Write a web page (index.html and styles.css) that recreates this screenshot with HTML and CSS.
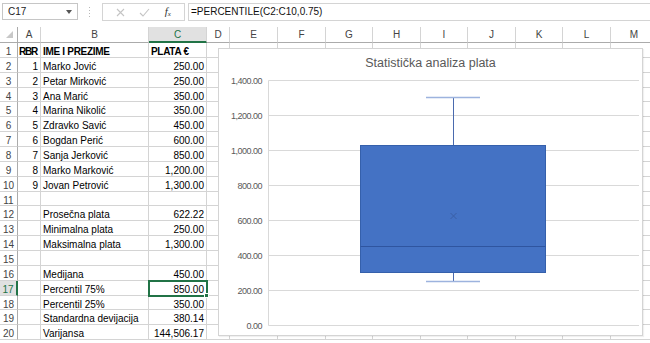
FILE: index.html
```html
<!DOCTYPE html>
<html lang="sr">
<head>
  <meta charset="UTF-8">
  <title>Statistička analiza plata</title>
  <link rel="stylesheet" href="styles.css">
</head>
<body>

<div class="topbar">
  <div class="namebox">
    <span>C17</span>
    <svg class="dropdown" width="6" height="4" viewBox="0 0 6 4"><polygon points="0,0 6,0 3,4" fill="#555"/></svg>
  </div>
  <svg class="grip" width="3" height="12" viewBox="0 0 3 12">
    <rect x="1" y="1" width="1" height="1" fill="#b8b8b8"/>
    <rect x="1" y="4" width="1" height="1" fill="#b8b8b8"/>
    <rect x="1" y="7" width="1" height="1" fill="#b8b8b8"/>
    <rect x="1" y="10" width="1" height="1" fill="#b8b8b8"/>
  </svg>
  <div class="buttons">
    <svg width="9" height="9" viewBox="0 0 9 9"><path d="M1 1 L8 8 M8 1 L1 8" stroke="#c4c4c4" stroke-width="1.1" fill="none"/></svg>
    <svg width="11" height="9" viewBox="0 0 11 9"><path d="M1 5 L4 8 L10 1" stroke="#c4c4c4" stroke-width="1.1" fill="none"/></svg>
    <span class="fx"><i>f</i><sub>x</sub></span>
  </div>
  <div class="formula">=PERCENTILE(C2:C10,0.75)</div>
</div>

<div class="sheet" id="sheet"></div>

<div class="chart">
  <div class="chart-title">Statistička analiza plata</div>
  <svg class="plot" width="423" height="258" viewBox="0 0 423 258">
    <g stroke="#d9d9d9" stroke-width="1">
      <line x1="49.5" y1="3.5" x2="420" y2="3.5"/>
      <line x1="49.5" y1="38.5" x2="420" y2="38.5"/>
      <line x1="49.5" y1="73.5" x2="420" y2="73.5"/>
      <line x1="49.5" y1="108.5" x2="420" y2="108.5"/>
      <line x1="49.5" y1="143.5" x2="420" y2="143.5"/>
      <line x1="49.5" y1="178.5" x2="420" y2="178.5"/>
      <line x1="49.5" y1="213.5" x2="420" y2="213.5"/>
      <line x1="49.5" y1="248.5" x2="420" y2="248.5"/>
      <line x1="49.5" y1="3.5" x2="49.5" y2="248.5"/>
    </g>
    <g class="axis-labels" text-anchor="end">
      <text x="43" y="6.5">1,400.00</text>
      <text x="43" y="41.5">1,200.00</text>
      <text x="43" y="76.5">1,000.00</text>
      <text x="43" y="111.5">800.00</text>
      <text x="43" y="146.5">600.00</text>
      <text x="43" y="181.5">400.00</text>
      <text x="43" y="216.5">200.00</text>
      <text x="43" y="251.5">0.00</text>
    </g>
    <!-- whiskers -->
    <line x1="234.5" y1="20.5" x2="234.5" y2="68.5" stroke="#4a6aae" stroke-width="1"/>
    <line x1="234.5" y1="195.5" x2="234.5" y2="204.5" stroke="#4a6aae" stroke-width="1"/>
    <line x1="207" y1="20.5" x2="261" y2="20.5" stroke="#9db3de" stroke-width="1.5"/>
    <line x1="207" y1="204.5" x2="261" y2="204.5" stroke="#9db3de" stroke-width="1.5"/>
    <!-- box -->
    <rect x="141.5" y="68.5" width="185" height="127" fill="#4472c4" stroke="#3560ab" stroke-width="1"/>
    <line x1="141.5" y1="169.5" x2="326.5" y2="169.5" stroke="#2f55a0" stroke-width="1"/>
    <!-- mean -->
    <path d="M231.5 136 L237.5 142 M237.5 136 L231.5 142" stroke="#3a5fa6" stroke-width="1"/>
  </svg>
</div>

<script>
  // Sheet content: column A, B, C for rows 1..20
  const data = [
    ['RBR', 'IME I PREZIME', 'PLATA €'],
    ['1', 'Marko Jović', '250.00'],
    ['2', 'Petar Mirković', '250.00'],
    ['3', 'Ana Marić', '350.00'],
    ['4', 'Marina Nikolić', '350.00'],
    ['5', 'Zdravko Savić', '450.00'],
    ['6', 'Bogdan Perić', '600.00'],
    ['7', 'Sanja Jerković', '850.00'],
    ['8', 'Marko Marković', '1,200.00'],
    ['9', 'Jovan Petrović', '1,300.00'],
    ['', '', ''],
    ['', 'Prosečna plata', '622.22'],
    ['', 'Minimalna plata', '250.00'],
    ['', 'Maksimalna plata', '1,300.00'],
    ['', '', ''],
    ['', 'Medijana', '450.00'],
    ['', 'Percentil 75%', '850.00'],
    ['', 'Percentil 25%', '350.00'],
    ['', 'Standardna devijacija', '380.14'],
    ['', 'Varijansa', '144,506.17']
  ];
  const cols = ['A', 'B', 'C', 'D', 'E', 'F', 'G', 'H', 'I', 'J', 'K', 'L', 'M'];
  const sheet = document.getElementById('sheet');

  // Header row
  const corner = document.createElement('div');
  corner.className = 'corner';
  corner.innerHTML = '<svg width="7" height="7" viewBox="0 0 7 7"><polygon points="7,0 7,7 0,7" fill="#c8c8c8"/></svg>';
  sheet.appendChild(corner);
  cols.forEach(col => {
    const hdr = document.createElement('div');
    hdr.className = col === 'C' ? 'colhdr sel' : 'colhdr';
    hdr.textContent = col;
    sheet.appendChild(hdr);
  });

  // Data rows
  data.forEach((row, i) => {
    const rowNo = i + 1;
    const rh = document.createElement('div');
    rh.className = rowNo === 17 ? 'rowhdr sel' : 'rowhdr';
    rh.textContent = rowNo;
    sheet.appendChild(rh);
    cols.forEach((col, c) => {
      const cell = document.createElement('div');
      cell.className = 'cell';
      if (c < 3) {
        cell.textContent = row[c];
        if (rowNo === 1) {
          cell.classList.add('bold');
          if (c === 0) cell.classList.add('tight');
        } else if (c === 0 || c === 2) {
          cell.classList.add('num');
        }
      }
      if (rowNo === 17 && col === 'C') {
        cell.classList.add('active');
      }
      sheet.appendChild(cell);
    });
  });
</script>

</body>
</html>
```

FILE: styles.css
```css
body {
  margin: 0;
  width: 650px;
  height: 343px;
  overflow: hidden;
  position: relative;
  background-color: #fff;
  font-family: 'Liberation Sans', Arial, sans-serif;
  font-size: 10px;
  color: #000;
}

/* Formula bar */
.topbar {
  height: 27px;
  display: flex;
  align-items: flex-start;
  padding-top: 3px;
  box-sizing: border-box;
}
.namebox {
  margin-left: 2px;
  width: 76px;
  height: 17px;
  border: 1px solid #c6c6c6;
  box-sizing: border-box;
  display: flex;
  align-items: center;
  justify-content: space-between;
  padding: 0 5px 0 5px;
  color: #222;
}
.grip {
  margin: 3px 0 0 10px;
}
.buttons {
  margin-left: 11px;
  width: 83px;
  height: 18px;
  border: 1px solid #d4d4d4;
  box-sizing: border-box;
  display: flex;
  align-items: center;
  justify-content: space-around;
  padding: 0 6px 0 6px;
}
.fx {
  font-family: 'Liberation Serif', 'Times New Roman', serif;
  font-size: 11px;
  color: #333;
  line-height: 1;
}
.fx sub {
  font-size: 7px;
  font-style: italic;
  vertical-align: -1px;
}
.formula {
  margin-left: 3px;
  flex: 1;
  height: 18px;
  border: 1px solid #d4d4d4;
  border-right: none;
  box-sizing: border-box;
  padding-left: 2px;
  line-height: 16px;
  color: #111;
}

/* Worksheet grid */
.sheet {
  display: grid;
  grid-template-columns: 18px 23px 108px 58px 23px 48px 48px 47px 48px 47px 48px 47px 48px 47px;
  grid-template-rows: 16px;
  grid-auto-rows: 14.86px;
}
.corner {
  border-right: 1px solid #ababab;
  border-bottom: 1px solid #ababab;
  box-sizing: border-box;
  display: flex;
  align-items: flex-end;
  justify-content: flex-end;
  padding: 0 4px 4px 0;
}
.colhdr {
  border-right: 1px solid #d4d4d4;
  border-bottom: 1px solid #ababab;
  box-sizing: border-box;
  text-align: center;
  line-height: 15px;
  color: #444;
}
.colhdr.sel {
  background-color: #e1e1e1;
  color: #217346;
  border-bottom: 2px solid #217346;
}
.rowhdr {
  border-right: 1px solid #ababab;
  border-bottom: 1px solid #d4d4d4;
  box-sizing: border-box;
  text-align: center;
  line-height: 13px;
  padding-top: 2px;
  color: #444;
}
.rowhdr.sel {
  background-color: #e1e1e1;
  color: #217346;
  border-right: 2px solid #217346;
}
.cell {
  border-right: 1px solid #d4d4d4;
  border-bottom: 1px solid #d4d4d4;
  box-sizing: border-box;
  line-height: 13px;
  padding: 2px 2px 0 2px;
  white-space: nowrap;
  overflow: visible;
}
.cell.num {
  text-align: right;
}
.cell.bold {
  font-weight: 700;
  letter-spacing: -0.3px;
}
.cell.tight {
  padding-left: 1px;
  letter-spacing: -1.2px;
}
.cell.active {
  position: relative;
  outline: 2px solid #217346;
  outline-offset: -1px;
  z-index: 1;
}
.cell.active::after {
  content: '';
  position: absolute;
  right: -3px;
  bottom: -3px;
  width: 5px;
  height: 5px;
  background-color: #217346;
  border: 1px solid #fff;
  box-sizing: border-box;
}

/* Floating chart */
.chart {
  position: absolute;
  left: 218px;
  top: 48px;
  width: 425px;
  height: 288px;
  border: 1px solid #d4d4d4;
  box-sizing: border-box;
  background-color: #fff;
  box-shadow: 1px 1px 1px rgba(0, 0, 0, 0.06);
  z-index: 2;
}
.chart-title {
  height: 28px;
  line-height: 28px;
  text-align: center;
  font-size: 12.5px;
  color: #595959;
}
.plot {
  display: block;
}
.axis-labels {
  font-family: 'Liberation Sans', Arial, sans-serif;
  font-size: 9px;
  letter-spacing: -0.5px;
  fill: #595959;
}
```
